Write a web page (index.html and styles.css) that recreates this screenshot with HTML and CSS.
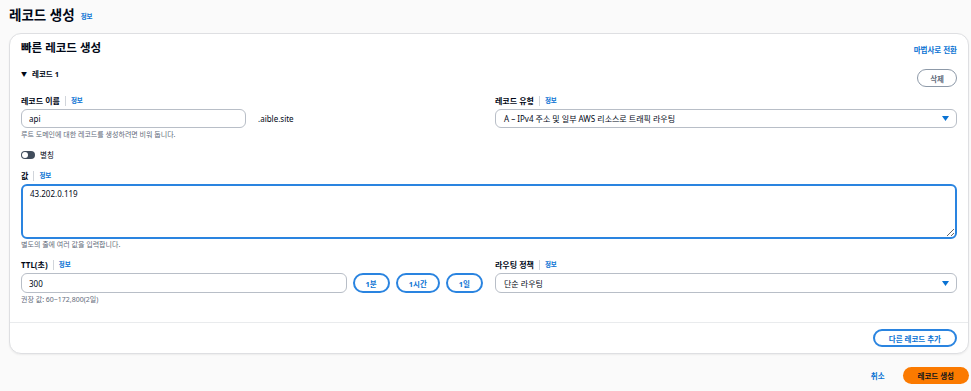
FILE: index.html
```html
<!DOCTYPE html>
<html lang="ko">
<head>
  <meta charset="UTF-8">
  <meta name="viewport" content="width=device-width, initial-scale=1.0">
  <title>레코드 생성</title>
  <link rel="stylesheet" href="styles.css">
</head>
<body>
  <div class="page">
    <!-- Page Header -->
    <div class="page-head">
      <h1>레코드 생성</h1>
      <a class="info">정보</a>
    </div>

    <!-- Quick Create Card -->
    <div class="card">
      <div class="card-header">
        <h2>빠른 레코드 생성</h2>
        <a class="link-strong">마법사로 전환</a>
      </div>

      <div class="record">
        <div class="record-head">
          <span class="record-title"><span class="caret">▼</span>레코드 1</span>
          <button class="btn btn-gray">삭제</button>
        </div>

        <!-- Name / Type -->
        <div class="two-col">
          <div class="field">
            <div class="label">레코드 이름<span class="sep"></span><a class="info">정보</a></div>
            <div class="name-row">
              <input class="input name-input" type="text" value="api">
              <span class="suffix">.aible.site</span>
            </div>
            <div class="hint">루트 도메인에 대한 레코드를 생성하려면 비워 둡니다.</div>
          </div>
          <div class="field">
            <div class="label">레코드 유형<span class="sep"></span><a class="info">정보</a></div>
            <div class="select">
              <span>A – IPv4 주소 및 일부 AWS 리소스로 트래픽 라우팅</span>
              <svg width="7" height="5" viewBox="0 0 7 5"><path d="M0 0h7L3.5 5z" fill="#0972d3"/></svg>
            </div>
          </div>
        </div>

        <!-- Alias -->
        <div class="toggle-row">
          <span class="toggle"><span class="knob"></span></span>
          <span>별칭</span>
        </div>

        <!-- Value -->
        <div class="field value-field">
          <div class="label">값<span class="sep"></span><a class="info">정보</a></div>
          <textarea class="textarea">43.202.0.119</textarea>
          <div class="hint hint-tight">별도의 줄에 여러 값을 입력합니다.</div>
        </div>

        <!-- TTL / Routing -->
        <div class="two-col ttl-row">
          <div class="field">
            <div class="label">TTL(초)<span class="sep"></span><a class="info">정보</a></div>
            <div class="ttl-inputs">
              <input class="input ttl-input" type="text" value="300">
              <button class="btn btn-blue">1분</button>
              <button class="btn btn-blue">1시간</button>
              <button class="btn btn-blue">1일</button>
            </div>
            <div class="hint">권장 값: 60~172,800(2일)</div>
          </div>
          <div class="field">
            <div class="label">라우팅 정책<span class="sep"></span><a class="info">정보</a></div>
            <div class="select select-tall">
              <span>단순 라우팅</span>
              <svg width="7" height="5" viewBox="0 0 7 5"><path d="M0 0h7L3.5 5z" fill="#0972d3"/></svg>
            </div>
          </div>
        </div>
      </div>

      <div class="card-footer">
        <button class="btn btn-blue btn-wide">다른 레코드 추가</button>
      </div>
    </div>

    <!-- Actions -->
    <div class="actions">
      <a class="link-strong">취소</a>
      <button class="btn btn-primary">레코드 생성</button>
    </div>
  </div>
</body>
</html>
```

FILE: styles.css
```css
* {
  margin: 0;
  padding: 0;
  box-sizing: border-box;
}

body {
  width: 971px;
  height: 391px;
  overflow: hidden;
  font-family: 'Noto Sans', 'Noto Sans CJK KR', sans-serif;
  font-size: 8px;
  background: #fafafa;
  color: #000716;
}

.page {
  padding: 0 2px 0 9px;
}

.page-head {
  display: flex;
  align-items: center;
  gap: 6px;
  padding-top: 6px;
  height: 24px;
  margin-bottom: 9px;
}

.page-head h1 {
  font-size: 13.5px;
  font-weight: 700;
  line-height: 18px;
}

.info {
  font-size: 6.5px;
  font-weight: 700;
  color: #0972d3;
  cursor: pointer;
}

.page-head .info {
  margin-top: 2px;
}

.link-strong {
  font-size: 7.5px;
  font-weight: 700;
  color: #0972d3;
  cursor: pointer;
}

.card {
  background: white;
  border: 1px solid #dedfe2;
  border-radius: 12px;
  box-shadow: 0 1px 2px rgba(0, 7, 22, 0.06);
}

.card-header {
  display: flex;
  justify-content: space-between;
  align-items: center;
  padding: 6px 11px 0;
}

.card-header h2 {
  font-size: 11.5px;
  font-weight: 700;
  line-height: 16px;
}

.card-header .link-strong {
  margin-top: 2px;
}

.record {
  padding: 0 11px 17px;
}

.record-head {
  display: flex;
  justify-content: space-between;
  align-items: flex-start;
  margin-top: 12px;
}

.record-title {
  font-size: 7.5px;
  font-weight: 700;
  line-height: 12px;
  display: flex;
  align-items: center;
}

.caret {
  font-size: 6px;
  margin-right: 5px;
}

.btn {
  font-family: inherit;
  font-size: 7.5px;
  font-weight: 700;
  height: 18px;
  border-radius: 20px;
  background: white;
  cursor: pointer;
  white-space: nowrap;
}

.btn-gray {
  margin-top: 1px;
  padding: 0 12px;
  border: 1px solid #8d99a8;
  color: #5f6b7a;
}

.btn-blue {
  padding: 0 11px;
  border: 2px solid #2a84e0;
  color: #0972d3;
}

.btn-wide {
  padding: 0 14px;
}

.btn-primary {
  height: 17px;
  padding: 0 15px;
  border: none;
  background: #fb7a00;
  color: #0f141a;
}

.two-col {
  display: grid;
  grid-template-columns: 1fr 1fr;
  column-gap: 12px;
  margin-top: 8px;
}

.label {
  display: flex;
  align-items: center;
  font-size: 8px;
  font-weight: 700;
  line-height: 12px;
}

.sep {
  width: 1px;
  height: 10px;
  background: #d1d5db;
  margin: 0 5px;
}

.input {
  font-family: inherit;
  font-size: 8px;
  color: #000716;
  height: 19px;
  padding: 0 7px;
  border: 1px solid #b8bec7;
  border-radius: 6px;
  background: white;
  outline: none;
}

.name-row {
  display: flex;
  align-items: center;
  gap: 12px;
  margin-top: 2px;
}

.name-input {
  width: 225px;
}

.suffix {
  font-size: 8px;
}

.hint {
  font-size: 7px;
  line-height: 10px;
  color: #5f6b7a;
  margin-top: 2px;
}

.hint-tight {
  margin-top: 1px;
}

.select {
  display: flex;
  justify-content: space-between;
  align-items: center;
  height: 19px;
  margin-top: 2px;
  padding: 0 7px 0 8px;
  border: 1px solid #b8bec7;
  border-radius: 6px;
  font-size: 8px;
}

.select-tall {
  height: 20px;
}

.toggle-row {
  display: flex;
  align-items: center;
  gap: 5px;
  margin-top: 10px;
  line-height: 10px;
  font-size: 7.5px;
}

.toggle {
  display: flex;
  align-items: center;
  width: 14px;
  height: 8px;
  padding: 0 1px;
  border-radius: 4px;
  background: #414d5c;
}

.knob {
  width: 6px;
  height: 6px;
  border-radius: 50%;
  background: white;
}

.value-field {
  margin-top: 10px;
}

.textarea {
  display: block;
  width: 100%;
  height: 55px;
  margin-top: 2px;
  padding: 3px 7px;
  font-family: inherit;
  font-size: 8px;
  line-height: 10px;
  color: #000716;
  border: 2px solid #2a84e0;
  border-radius: 6px;
  outline: none;
}

.ttl-row {
  margin-top: 9px;
}

.ttl-inputs {
  display: flex;
  align-items: center;
  gap: 6px;
  margin-top: 2px;
}

.ttl-input {
  flex: 1;
  min-width: 0;
  height: 20px;
}

.ttl-inputs .btn {
  height: 20px;
}

.card-footer {
  display: flex;
  justify-content: flex-end;
  padding: 6px 11px;
  border-top: 1px solid #e9ebed;
}

.actions {
  display: flex;
  justify-content: flex-end;
  align-items: center;
  gap: 18px;
  margin-top: 13px;
}
```
